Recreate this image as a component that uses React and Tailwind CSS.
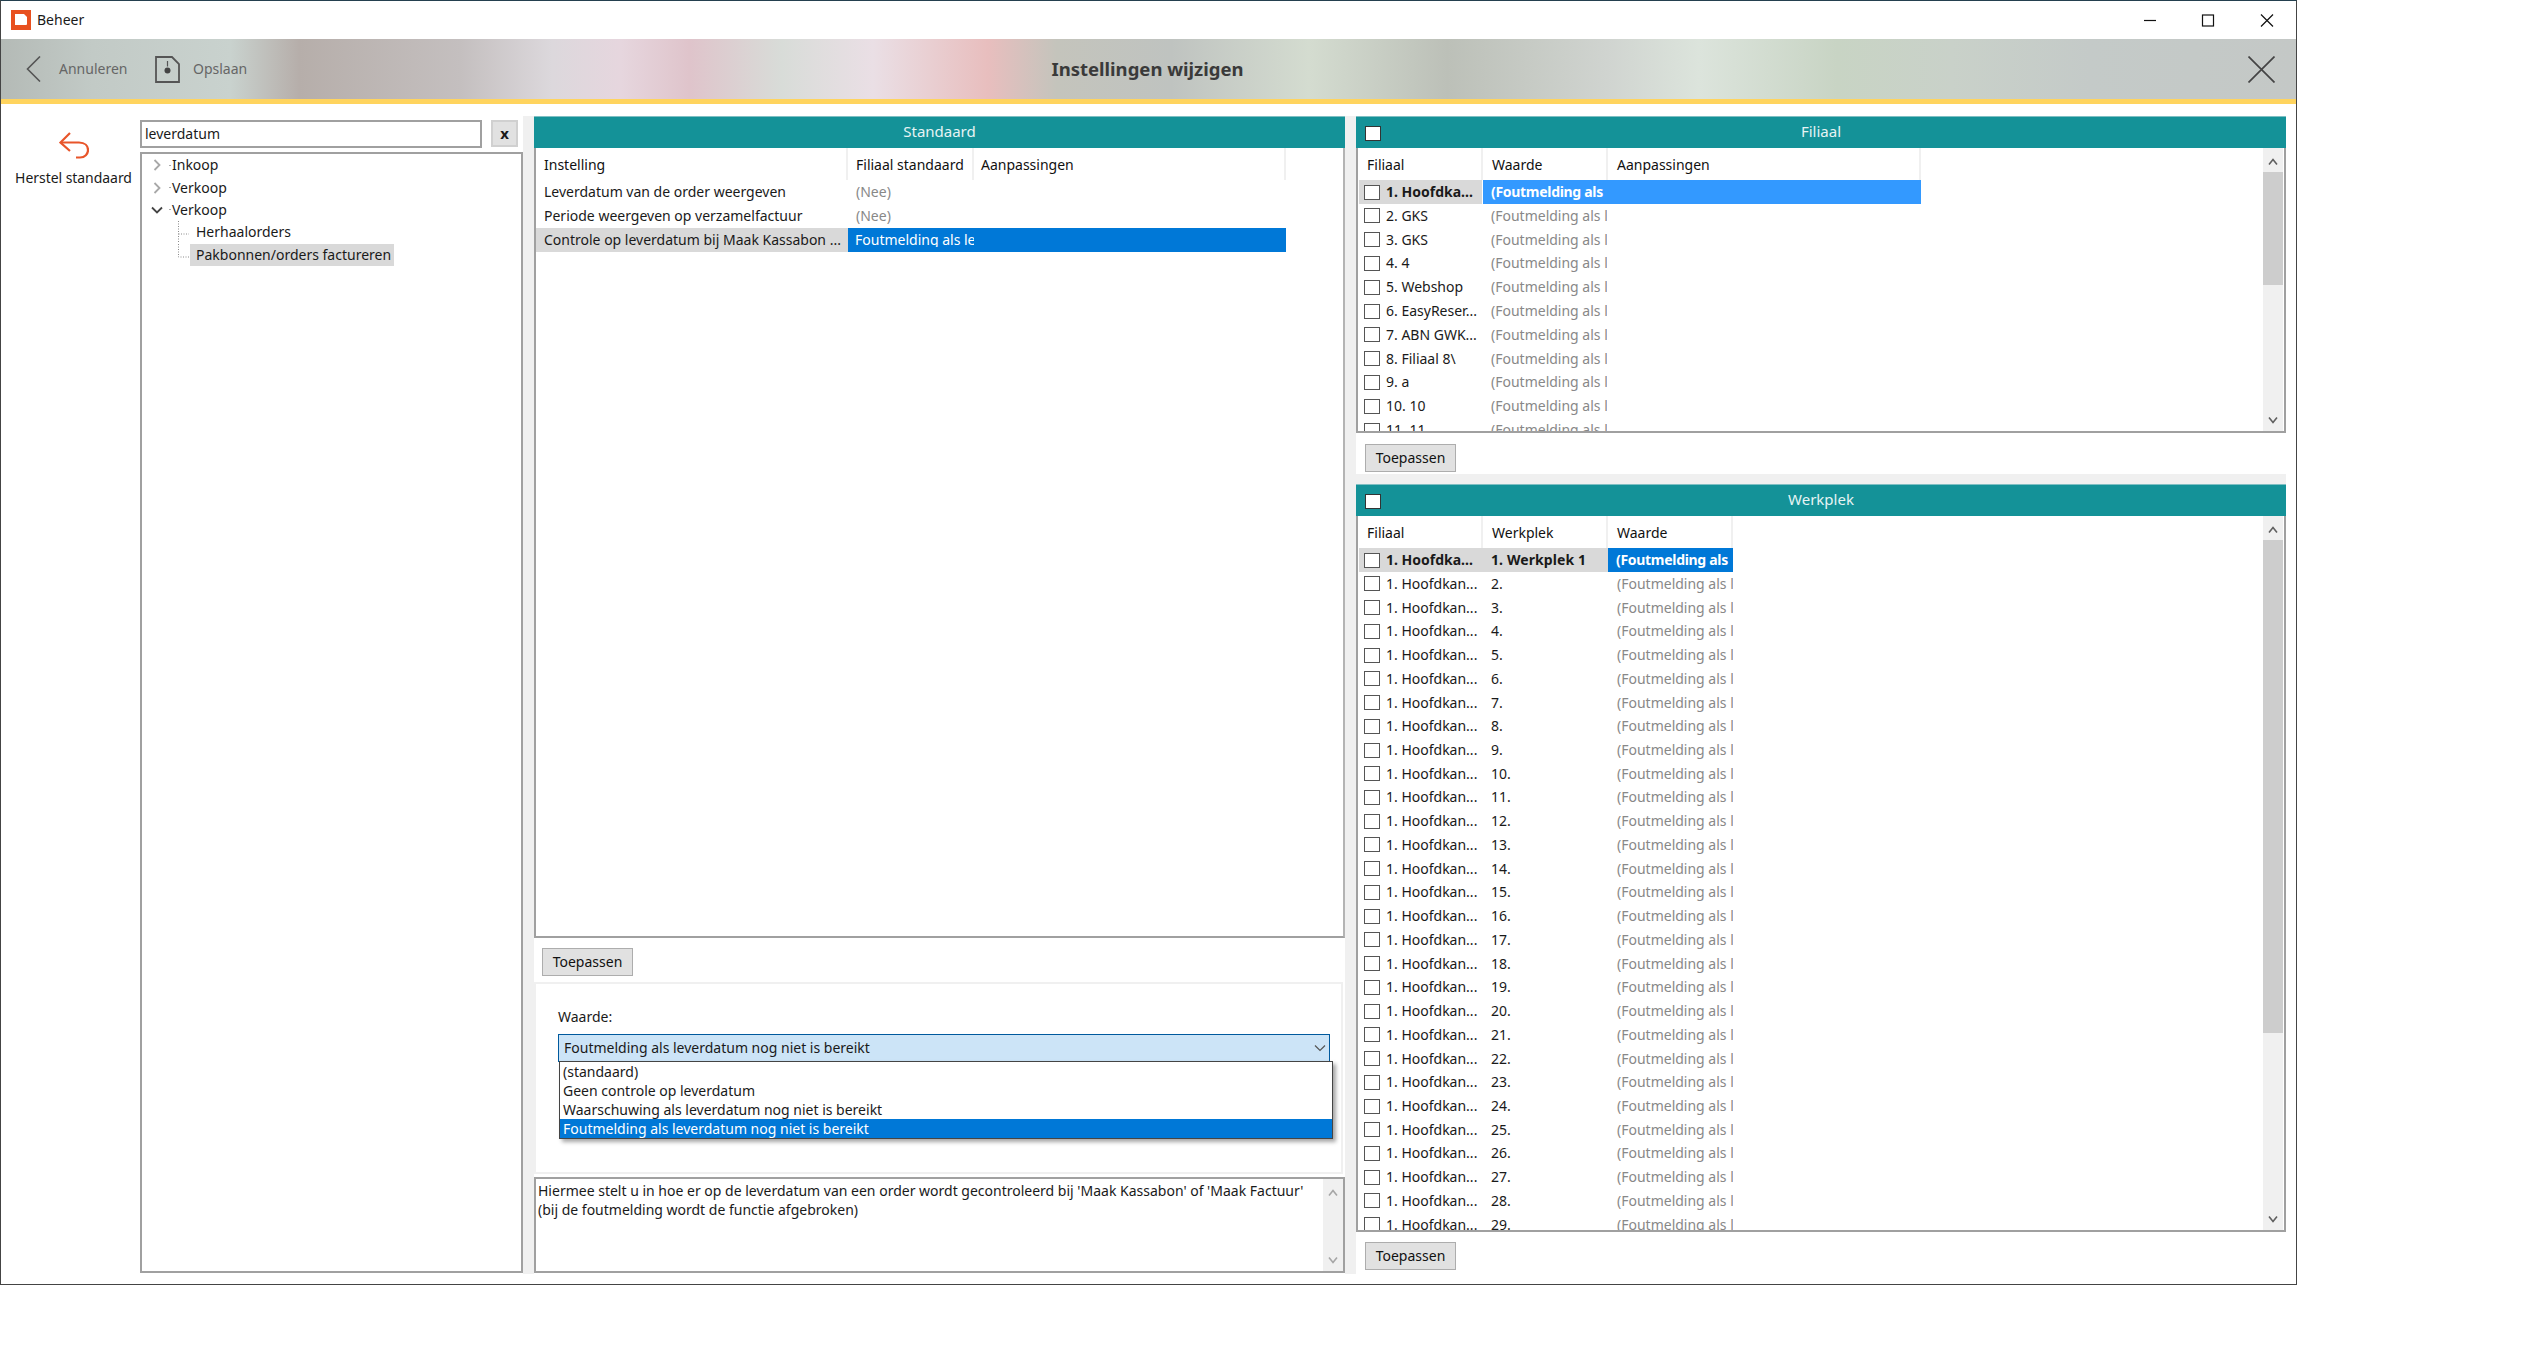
import React from 'react';

const filialen = [
    '2. GKS', '3. GKS', '4. 4', '5. Webshop', '6. EasyReser...', '7. ABN GWK...',
    '8. Filiaal 8\\', '9. a', '10. 10', '11. 11',
];

const werkplekken = Array.from({ length: 28 }, (_, i) => `${i + 2}.`);

const Checkbox = ({ className = 'border-[#555]' }) => (
    <span className={`block w-4 h-[15px] shrink-0 bg-white border ${className}`} />
);

const Button = () => (
    <button className="h-7 w-[91px] bg-[#e1e1e1] border border-[#adadad] text-[14px] text-[#111]">Toepassen</button>
);

const Arrow = ({ up, color = '#606060' }) => (
    <svg width="20" height="12" viewBox="0 0 20 12" fill="none" stroke={color} strokeWidth="1.6">
        <path d={up ? 'M6 8.5 L10 3.5 L14 8.5' : 'M6 3.5 L10 8.5 L14 3.5'} />
    </svg>
);

const Scrollbar = ({ thumb, arrowColor }) => (
    <div className="w-5 h-full shrink-0 bg-[#f0f0f0] flex flex-col items-center pt-[8px] pb-[5px]">
        <Arrow up color={arrowColor} />
        {thumb && <div className={`w-5 mt-[4px] bg-[#cdcdcd] ${thumb}`} />}
        <div className="flex-1" />
        <Arrow color={arrowColor} />
    </div>
);

const HeadCell = ({ width, className = 'pl-[9px]', children }) => (
    <div className={`${width} h-full shrink-0 pt-[2px] flex items-center border-r-2 border-[#f0f0f0] text-[#111] ${className}`}>{children}</div>
);

const Cell = ({ width, className = '', children }) => (
    <div className={`${width} h-full shrink-0 flex items-center overflow-hidden whitespace-nowrap ${className}`}>{children}</div>
);

const NameCell = ({ className = '', children }) => (
    <div className={`w-[123px] h-full shrink-0 pl-[5px] flex items-center gap-[6px] overflow-hidden whitespace-nowrap ${className}`}>
        <Checkbox />
        <span>{children}</span>
    </div>
);

const PanelTitle = ({ check, children }) => (
    <div className="h-8 shrink-0 pb-[2px] bg-[#149298] border-t border-[#7fbfc3] text-[#e6f4f4] text-[15px] flex items-center justify-center relative">
        {check && <span className="absolute left-[9px] top-[9px]"><Checkbox className="border-[#333]" /></span>}
        {children}
    </div>
);

function TreeNode({ label, open }) {
    return (
        <div className="h-[22.4px] flex items-center">
            <svg className="ml-[8px]" width="14" height="14" viewBox="0 0 14 14" fill="none" stroke={open ? '#444' : '#a8a8a8'} strokeWidth="1.8">
                <path d={open ? 'M2 4.5 L7 9.5 L12 4.5' : 'M4.5 2 L9.5 7 L4.5 12'} />
            </svg>
            <span className="ml-[5px] w-[2px] h-px bg-[#aaa]" />
            <span className="ml-[1px]">{label}</span>
        </div>
    );
}

function TreeChild({ label, selected, last }) {
    return (
        <div className="h-[22.4px] flex items-center">
            <svg className="ml-[36px] self-stretch" width="12" height="22" viewBox="0 0 12 22" fill="none" stroke="#8a8a8a" strokeDasharray="1 1.5">
                <path d={last ? 'M0.5 0 V13 H11' : 'M0.5 0 V22 M0.5 13 H11'} />
            </svg>
            <span className={`h-full pl-[6px] pr-[3px] flex items-center ${selected ? 'bg-[#d9d9d9]' : ''}`}>{label}</span>
        </div>
    );
}

export default function App() {
    return (
        <div className="w-[2545px] h-[1359px] bg-white font-['Noto_Sans',sans-serif] text-[14px] leading-none text-[#1a1a1a] overflow-hidden">
            <div className="w-[2297px] h-[1285px] border border-[#444] border-t-[#24404f] flex flex-col">
                {/* title bar */}
                <div className="h-[38px] shrink-0 flex items-center">
                    <svg className="ml-[10px]" width="20" height="20" viewBox="0 0 20 20">
                        <rect width="20" height="20" fill="#e8501f" />
                        <path d="M4 4 h9 l3 3 v7 q0 1 -1 1 h-11 z" fill="#fff" />
                    </svg>
                    <span className="ml-[6px]">Beheer</span>
                    <div className="flex-1" />
                    <svg width="170" height="20" viewBox="0 0 170 20" fill="none" stroke="#111" strokeWidth="1.2">
                        <path d="M18 10.5 H30" />
                        <rect x="76.5" y="5" width="11" height="11" />
                        <path d="M135 4.5 L147 16.5 M147 4.5 L135 16.5" />
                    </svg>
                </div>

                {/* header band */}
                <div className="h-[60px] shrink-0 flex items-center relative text-[#666] bg-[linear-gradient(90deg,#b4bab6_0%,#c2cac6_4%,#c9d2ce_10%,#b6aeaa_13%,#c4bfbf_20%,#dcd8dc_24%,#e6d6de_27%,#dfc4cb_30%,#d8dcd8_34%,#eadfe5_38%,#e8bebe_43%,#c4c4bc_46%,#bfc3c0_51%,#d4dcd0_57%,#bcc0b8_63%,#d0d4d0_70%,#dce4dc_74%,#c8d4c4_80%,#c9d1c9_85%,#c4cac8_91%,#c4c8c6_100%)]">
                    <svg className="ml-[25px]" width="15" height="26" viewBox="0 0 15 26" fill="none" stroke="#555" strokeWidth="1.6">
                        <path d="M14 0.5 L1.5 13 L14 25.5" />
                    </svg>
                    <span className="ml-[18px] w-[96px]">Annuleren</span>
                    <svg width="25" height="27" viewBox="0 0 25 27" fill="none" stroke="#555" strokeWidth="1.8">
                        <path d="M1 1 H17 L24 8 V26 H1 Z" />
                        <circle cx="12.5" cy="14.5" r="3" fill="#444" stroke="none" />
                        <path d="M12.5 5 V10.5" strokeWidth="1.2" />
                    </svg>
                    <span className="ml-[13px]">Opslaan</span>
                    <span className="absolute left-[1049px] w-[195px] text-center font-bold text-[18.5px] text-[#3a3a3a] whitespace-nowrap">Instellingen wijzigen</span>
                    <div className="flex-1" />
                    <svg className="mr-[21px]" width="27" height="27" viewBox="0 0 27 27" fill="none" stroke="#444" strokeWidth="1.7">
                        <path d="M0.5 0.5 L26.5 26.5 M26.5 0.5 L0.5 26.5" />
                    </svg>
                </div>
                <div className="h-[5px] shrink-0 bg-[#ffd45e]" />

                {/* content */}
                <div className="flex-1 flex items-start pt-3 min-h-0">
                    <div className="w-[139px] shrink-0 pl-[6px] flex flex-col items-center pt-[16px]">
                        <svg width="30" height="27" viewBox="0 0 30 27" fill="none" stroke="#e8552a" strokeWidth="2.2">
                            <path d="M11 1 L1.5 10.5 L11 19" />
                            <path d="M2 10.5 H20 C26 10.5 29 14 29 18 C29 22 26 25.5 21 25.5 H17" />
                        </svg>
                        <span className="mt-[12px] whitespace-nowrap tracking-[-0.05px]">Herstel standaard</span>
                    </div>

                    {/* search and tree */}
                    <div className="w-[383px] shrink-0 h-[1157px] flex flex-col">
                        <div className="h-[36px] shrink-0 pt-[4px] flex items-start">
                            <div className="w-[342px] h-7 border-2 border-[#a0a0a0] pl-[3px] flex items-center bg-white">leverdatum</div>
                            <div className="ml-[9px] w-[27px] h-[27px] bg-[#e1e1e1] border-2 border-[#d0d0d0] flex items-center justify-center font-bold text-[15px]">x</div>
                        </div>
                        <div className="flex-1 border-2 border-[#a0a0a0] text-[14px]">
                            <TreeNode label="Inkoop" />
                            <TreeNode label="Verkoop" />
                            <TreeNode label="Verkoop" open />
                            <TreeChild label="Herhaalorders" />
                            <TreeChild label="Pakbonnen/orders factureren" selected last />
                        </div>
                    </div>

                    <div className="w-[11px] shrink-0 self-stretch bg-[#f0f0f0] mb-[10px]" />

                    {/* middle column */}
                    <div className="w-[811px] shrink-0 h-[1157px] flex flex-col">
                        <PanelTitle>Standaard</PanelTitle>
                        <div className="h-[790px] shrink-0 border-2 border-t-0 border-[#a0a0a0] border-r-[#b4b4b4]">
                            <div className="h-8 flex items-center">
                                <HeadCell width="w-[312px]" className="pl-[8px]">Instelling</HeadCell>
                                <HeadCell width="w-[126px]" className="pl-[8px]">Filiaal standaard</HeadCell>
                                <HeadCell width="w-[312px]" className="pl-[7px]">Aanpassingen</HeadCell>
                            </div>
                            <div className="h-[24px] flex items-center">
                                <Cell width="w-[312px]" className="pl-[8px]">Leverdatum van de order weergeven</Cell>
                                <Cell width="w-[126px]" className="pl-[8px] text-[#888]">(Nee)</Cell>
                            </div>
                            <div className="h-[24px] flex items-center">
                                <Cell width="w-[312px]" className="pl-[8px]">Periode weergeven op verzamelfactuur</Cell>
                                <Cell width="w-[126px]" className="pl-[8px] text-[#888]">(Nee)</Cell>
                            </div>
                            <div className="h-[24px] flex items-center">
                                <Cell width="w-[312px]" className="pl-[8px] bg-[#d9d9d9]">Controle op leverdatum bij Maak Kassabon ...</Cell>
                                <div className="w-[438px] h-full bg-[#0078d7] text-white flex items-center pl-[7px]">
                                    <span className="w-[119px] overflow-hidden whitespace-nowrap">Foutmelding als le</span>
                                </div>
                            </div>
                        </div>
                        <div className="h-[44px] shrink-0 pl-2 pt-[10px]"><Button /></div>
                        <div className="h-[192px] shrink-0 border-2 border-[#f0f0f0] pl-[22px] pt-[26px] mr-[2px] relative">
                            <div className="leading-none">Waarde:</div>
                            <div className="mt-[10px] w-[772px] h-7 bg-[#cce4f7] border border-[#005a9e] pl-[5px] pr-[3px] flex items-center justify-between">
                                <span>Foutmelding als leverdatum nog niet is bereikt</span>
                                <svg width="12" height="8" viewBox="0 0 12 8" fill="none" stroke="#555" strokeWidth="1.2">
                                    <path d="M1 1.5 L6 6.5 L11 1.5" />
                                </svg>
                            </div>
                            <div className="absolute left-[23px] top-[77px] w-[774px] h-[78px] bg-white border border-[#444] shadow-[3px_3px_4px_rgba(0,0,0,0.35)] flex flex-col">
                                <div className="h-[19px] pl-[3px] flex items-center">(standaard)</div>
                                <div className="h-[19px] pl-[3px] flex items-center">Geen controle op leverdatum</div>
                                <div className="h-[19px] pl-[3px] flex items-center">Waarschuwing als leverdatum nog niet is bereikt</div>
                                <div className="flex-1 pl-[3px] flex items-center bg-[#0078d7] text-white">Foutmelding als leverdatum nog niet is bereikt</div>
                            </div>
                        </div>
                        <div className="h-[96px] mt-[3px] shrink-0 border-2 border-[#a0a0a0] flex">
                            <div className="flex-1 pl-[2px] pt-[2px] leading-[19px]">
                                <div>Hiermee stelt u in hoe er op de leverdatum van een order wordt gecontroleerd bij 'Maak Kassabon' of 'Maak Factuur'</div>
                                <div>(bij de foutmelding wordt de functie afgebroken)</div>
                            </div>
                            <Scrollbar arrowColor="#a6a6a6" />
                        </div>
                    </div>

                    <div className="w-[11px] shrink-0 self-stretch bg-[#f0f0f0] mb-[10px]" />

                    {/* right column */}
                    <div className="w-[930px] shrink-0 h-[1157px] flex flex-col">
                        <PanelTitle check>Filiaal</PanelTitle>
                        <div className="h-[285px] shrink-0 border-2 border-t-0 border-[#a0a0a0] flex">
                            <div className="flex-1 min-w-0 overflow-hidden">
                                <div className="h-8 flex items-center">
                                    <HeadCell width="w-[125px]">Filiaal</HeadCell>
                                    <HeadCell width="w-[125px]">Waarde</HeadCell>
                                    <HeadCell width="w-[313px]">Aanpassingen</HeadCell>
                                </div>
                                <div className="h-[24px] flex items-center font-bold">
                                    <NameCell className="ml-[1px] bg-[#d9d9d9]">1. Hoofdka...</NameCell>
                                    <div className="w-[438px] h-full ml-[1px] bg-[#3399ff] text-white flex items-center pl-[8px]">
                                        <span className="tracking-[-0.3px] whitespace-nowrap">(Foutmelding als</span>
                                    </div>
                                </div>
                                {filialen.map((name) => (
                                    <div key={name} className="h-[23.8px] flex items-center">
                                        <NameCell className="ml-[1px]">{name}</NameCell>
                                        <Cell width="w-[125px]" className="pl-[9px] text-[#888]">(Foutmelding als l</Cell>
                                    </div>
                                ))}
                            </div>
                            <div className="pr-[1px]"><Scrollbar thumb="h-[113px]" /></div>
                        </div>
                        <div className="h-[41px] shrink-0 pl-[9px] pt-[11px]"><Button /></div>
                        <div className="h-[10px] shrink-0 bg-[#f0f0f0]" />
                        <PanelTitle check>Werkplek</PanelTitle>
                        <div className="h-[716px] shrink-0 border-2 border-t-0 border-[#a0a0a0] flex">
                            <div className="flex-1 min-w-0 overflow-hidden">
                                <div className="h-8 flex items-center">
                                    <HeadCell width="w-[125px]">Filiaal</HeadCell>
                                    <HeadCell width="w-[125px]">Werkplek</HeadCell>
                                    <HeadCell width="w-[125px]">Waarde</HeadCell>
                                </div>
                                <div className="h-[24px] flex items-center font-bold">
                                    <NameCell className="ml-[1px] bg-[#d9d9d9]">1. Hoofdka...</NameCell>
                                    <Cell width="w-[126px]" className="pl-[9px] bg-[#d9d9d9] tracking-[0.1px]">1. Werkplek 1</Cell>
                                    <Cell width="w-[125px]" className="pl-[8px] bg-[#0078d7] text-white tracking-[-0.3px]">(Foutmelding als</Cell>
                                </div>
                                {werkplekken.map((nr) => (
                                    <div key={nr} className="h-[23.74px] flex items-center">
                                        <NameCell className="ml-[1px]">1. Hoofdkan...</NameCell>
                                        <Cell width="w-[126px]" className="pl-[9px]">{nr}</Cell>
                                        <Cell width="w-[125px]" className="pl-[9px] text-[#888]">(Foutmelding als l</Cell>
                                    </div>
                                ))}
                            </div>
                            <div className="pr-[1px]"><Scrollbar thumb="h-[493px]" /></div>
                        </div>
                        <div className="pl-[9px] pt-[10px]"><Button /></div>
                    </div>
                </div>
            </div>
        </div>
    );
}
